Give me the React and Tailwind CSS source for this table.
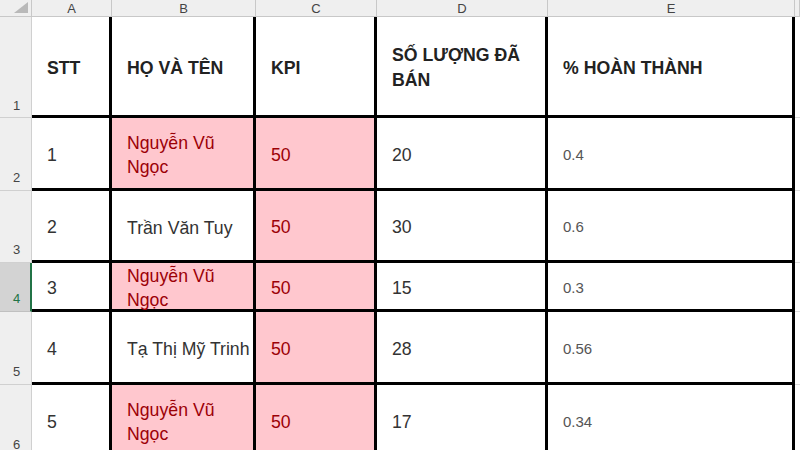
import React from 'react';

const rows = [
  { n: '2', stt: '1', name: 'Nguyễn Vũ Ngọc', sold: '20', pct: '0.4', hi: true },
  { n: '3', stt: '2', name: 'Trần Văn Tuy', sold: '30', pct: '0.6', hi: false },
  { n: '4', stt: '3', name: 'Nguyễn Vũ Ngọc', sold: '15', pct: '0.3', hi: true, active: true },
  { n: '5', stt: '4', name: 'Tạ Thị Mỹ Trinh', sold: '28', pct: '0.56', hi: false },
  { n: '6', stt: '5', name: 'Nguyễn Vũ Ngọc', sold: '17', pct: '0.34', hi: true },
];

const cell = 'flex items-center pl-[15px] pt-[4px] border-r-[3px] border-b-[3px] border-black';

export default function App() {
  return (
    <div className="w-[800px] h-[450px] overflow-hidden bg-white font-['Liberation_Sans',Arial,sans-serif]">
      <div className="grid grid-cols-[32px_80px_144px_121px_171px_247px_1fr] grid-rows-[17px_101px_73px_72px_49px_73px_73px]">
        {/* Column headers */}
        <div className="relative bg-[#efefef] border-r border-b border-[#c8c8c8]">
          <svg className="absolute right-[3px] bottom-[3px]" width="14" height="11" viewBox="0 0 14 11">
            <polygon points="14,0 14,11 0,11" fill="#b9b9b9" />
          </svg>
        </div>
        {['A', 'B', 'C', 'D', 'E', ''].map((c, i) => (
          <div
            key={i}
            className="flex items-center justify-center bg-[#efefef] border-r border-b border-[#c8c8c8] text-[13px] text-[#444] leading-none"
          >
            {c}
          </div>
        ))}

        {/* Header row */}
        <div className="flex items-end pl-[13px] pb-[2px] bg-[#efefef] border-r border-b border-[#d0d0d0] text-[13px] text-[#444]">
          1
        </div>
        <div className={`${cell} text-[17.7px] font-bold text-[#222]`}>STT</div>
        <div className={`${cell} text-[17.7px] font-bold text-[#222]`}>HỌ VÀ TÊN</div>
        <div className={`${cell} text-[17.7px] font-bold text-[#222]`}>KPI</div>
        <div className={`${cell} text-[17.7px] font-bold text-[#222] leading-[25px] pr-2`}>SỐ LƯỢNG ĐÃ BÁN</div>
        <div className={`${cell} text-[17.7px] font-bold text-[#222]`}>% HOÀN THÀNH</div>
        <div className="border-b border-[#dcdcdc]" />

        {rows.map((r) => (
          <React.Fragment key={r.n}>
            <div
              className={
                r.active
                  ? 'flex items-end pl-[13px] pb-[3px] bg-[#d3d3d3] border-r-2 border-r-[#217346] border-b border-b-[#c0c0c0] text-[13px] text-[#217346]'
                  : 'flex items-end pl-[13px] pb-[3px] bg-[#efefef] border-r border-b border-[#d0d0d0] text-[13px] text-[#444]'
              }
            >
              {r.n}
            </div>
            <div className={`${cell} text-[17.7px] text-[#333]`}>{r.stt}</div>
            <div
              className={`${cell} text-[17.7px] leading-[24px] ${
                r.hi ? 'bg-[#ffc7ce] text-[#9c0006] pr-2' : 'text-[#333] whitespace-nowrap'
              }`}
            >
              {r.name}
            </div>
            <div className={`${cell} bg-[#ffc7ce] text-[17.7px] text-[#9c0006]`}>50</div>
            <div className={`${cell} text-[17.7px] text-[#333]`}>{r.sold}</div>
            <div className={`${cell} text-[15px] text-[#555]`}>{r.pct}</div>
            <div className="border-b border-[#dcdcdc]" />
          </React.Fragment>
        ))}
      </div>
    </div>
  );
}
